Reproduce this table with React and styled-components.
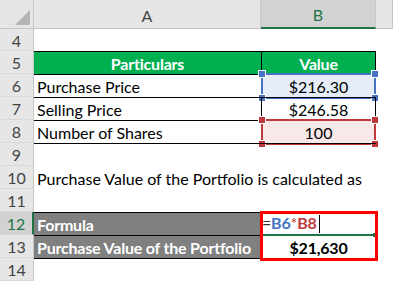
import React from "react";
import styled, { createGlobalStyle, css } from "styled-components";

const Global = createGlobalStyle`
  html, body { margin: 0; padding: 0; background: #ffffff; overflow: hidden; }
  * { box-sizing: border-box; }
`;

const GREEN = "#00b050";
const GRAY = "#808080";
const XL = "#217346";

const Sheet = styled.div`
  display: grid;
  grid-template-columns: 34px 227px 115px 17px;
  grid-template-rows: 29px 22px repeat(10, 23px);
  width: 393px;
  height: 283px;
  overflow: hidden;
  font-family: Lato, "Liberation Sans", sans-serif;
  font-size: 16px;
  color: #000;
  background: #fff;
`;

const Corner = styled.div`
  position: relative;
  background: #e6e6e6;
  border-right: 1px solid #c6c6c6;
  border-bottom: 1px solid #c6c6c6;
`;

const CornerMark = styled.svg`
  position: absolute;
  left: 14px;
  top: 9px;
`;

const ColHead = styled.div`
  display: flex;
  align-items: center;
  justify-content: center;
  padding-top: 2px;
  background: ${(p) => (p.$selected ? "#d2d2d2" : "#e6e6e6")};
  color: ${(p) => (p.$selected ? XL : "#444")};
  border-right: 1px solid #c6c6c6;
  border-bottom: ${(p) => (p.$selected ? `2px solid ${XL}` : "1px solid #c6c6c6")};
`;

const RowHead = styled.div`
  display: flex;
  align-items: center;
  justify-content: center;
  padding-top: 1px;
  background: ${(p) => (p.$selected ? "#d2d2d2" : "#e6e6e6")};
  color: ${(p) => (p.$selected ? XL : "#444")};
  border-bottom: 1px solid #d8d8d8;
  border-right: ${(p) => (p.$selected ? `2px solid ${XL}` : "1px solid #c6c6c6")};
`;

const Cell = styled.div`
  position: relative;
  display: flex;
  align-items: flex-end;
  justify-content: ${(p) => (p.$center ? "center" : "flex-start")};
  padding: 0 3px 2px 3px;
  line-height: 16px;
  white-space: nowrap;
  overflow: visible;
  background: ${(p) => p.$fill || "transparent"};
  color: ${(p) => p.$color || "#000"};
  font-weight: ${(p) => (p.$bold ? 700 : 400)};
  letter-spacing: ${(p) => (p.$bold ? "-0.2px" : "0")};
  ${(p) => p.$top && css`border-top: 1px solid #000;`}
  ${(p) => p.$left && css`border-left: 1px solid #000;`}
  ${(p) => p.$right && css`border-right: 1px solid #000;`}
`;

const FormulaCell = styled(Cell)`
  justify-content: flex-start;
  padding-left: 0;
  z-index: 1;
`;

const Pick = styled.div`
  position: absolute;
  left: -1px;
  right: -1px;
  top: -2px;
  bottom: -2px;
  border: 2px solid ${(p) => p.$color};
  pointer-events: none;
`;

const Handle = styled.span`
  position: absolute;
  width: 6px;
  height: 6px;
  background: ${(p) => p.$color};
  outline: 1px solid #fff;
  ${(p) => (p.$v === "t" ? "top: -4px;" : "bottom: -4px;")}
  ${(p) => (p.$h === "l" ? "left: -4px;" : "right: -4px;")}
`;

const Selection = ({ color }) => (
  <Pick $color={color}>
    <Handle $color={color} $v="t" $h="l" />
    <Handle $color={color} $v="t" $h="r" />
    <Handle $color={color} $v="b" $h="l" />
    <Handle $color={color} $v="b" $h="r" />
  </Pick>
);

const ActiveLine = styled.div`
  position: absolute;
  left: 0;
  right: 2px;
  bottom: -1px;
  height: 2px;
  background: ${XL};
`;

const ActiveHandle = styled.span`
  position: absolute;
  right: -2px;
  bottom: -2px;
  width: 4px;
  height: 4px;
  background: ${XL};
`;

const Caret = styled.span`
  display: inline-block;
  width: 1px;
  height: 18px;
  margin-left: 2px;
  background: #000;
  vertical-align: -4px;
`;

const Ref = styled.span`
  color: ${(p) => p.$color};
  font-weight: ${(p) => (p.$bold ? 700 : 400)};
`;

const RedBox = styled.div`
  position: absolute;
  left: -2px;
  right: -3px;
  top: -2px;
  height: 50px;
  border: 3px solid #ff0000;
  z-index: 3;
  pointer-events: none;
`;

const Empty = () => <Cell />;

export default function App() {
  return (
    <>
      <Global />
      <Sheet>
        <Corner>
          <CornerMark width="17" height="17" viewBox="0 0 17 17">
            <polygon points="16,1 16,16 1,16" fill="#b4b4b4" />
          </CornerMark>
        </Corner>
        <ColHead>A</ColHead>
        <ColHead $selected>B</ColHead>
        <ColHead />

        <RowHead>4</RowHead>
        <Empty />
        <Empty />
        <Empty />

        <RowHead>5</RowHead>
        <Cell $top $center $bold $fill={GREEN} $color="#fff">Particulars</Cell>
        <Cell $top $left $right $center $bold $fill={GREEN} $color="#fff">Value</Cell>
        <Empty />

        <RowHead>6</RowHead>
        <Cell $top>Purchase Price</Cell>
        <Cell $top $left $right $center $fill="#e6edf8">
          $216.30
          <Selection color="#4472c4" />
        </Cell>
        <Empty />

        <RowHead>7</RowHead>
        <Cell $top>Selling Price</Cell>
        <Cell $top $left $right $center>$246.58</Cell>
        <Empty />

        <RowHead>8</RowHead>
        <Cell $top>Number of Shares</Cell>
        <Cell $top $left $right $center $fill="#f8e8e9">
          100
          <Selection color="#c0393b" />
        </Cell>
        <Empty />

        <RowHead>9</RowHead>
        <Cell $top />
        <Cell $top />
        <Empty />

        <RowHead>10</RowHead>
        <Cell>Purchase Value of the Portfolio is calculated as</Cell>
        <Empty />
        <Empty />

        <RowHead>11</RowHead>
        <Empty />
        <Empty />
        <Empty />

        <RowHead $selected>12</RowHead>
        <Cell $top $bold $fill={GRAY} $color="#fff">Formula</Cell>
        <FormulaCell $top $left $right $bold>
          <span>
            <Ref $color="#333">=</Ref>
            <Ref $color="#4472c4" $bold>B6</Ref>
            <Ref $color="#c0393b">*</Ref>
            <Ref $color="#c0393b" $bold>B8</Ref>
            <Caret />
          </span>
          <ActiveLine />
          <ActiveHandle />
          <RedBox />
        </FormulaCell>
        <Empty />

        <RowHead>13</RowHead>
        <Cell $top $bold $fill={GRAY} $color="#fff">Purchase Value of the Portfolio</Cell>
        <Cell $top $left $right $center $bold>$21,630</Cell>
        <Empty />

        <RowHead>14</RowHead>
        <Cell $top />
        <Cell $top />
        <Empty />
      </Sheet>
    </>
  );
}
